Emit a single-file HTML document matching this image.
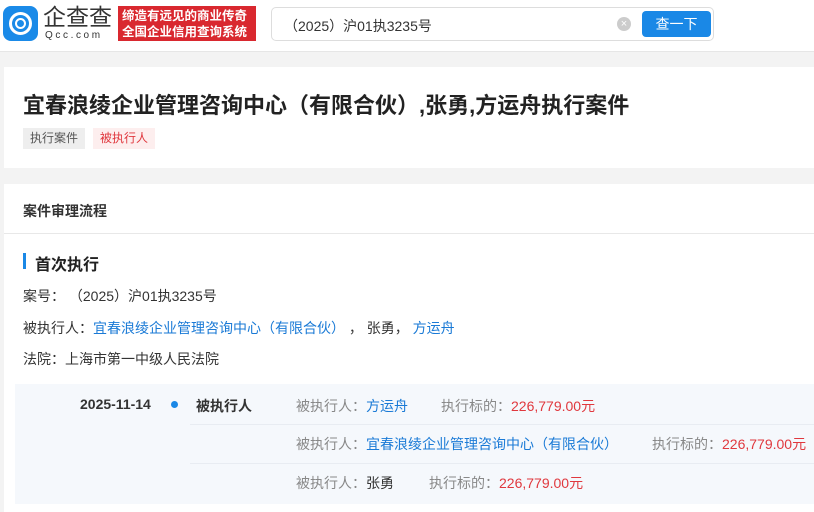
<!DOCTYPE html><html><head><meta charset="utf-8"><style>
*{margin:0;padding:0;box-sizing:border-box}
body{width:814px;height:512px;overflow:hidden;background:#f3f3f3;font-family:"Liberation Sans","Noto Sans CJK SC",sans-serif;color:#333;position:relative}
.a{position:absolute;white-space:nowrap}
.blue{color:#1a7ad6}.red{color:#e0383e}.g{color:#888}
</style></head><body>
<div class="a" style="left:0;top:0;width:814px;height:52px;background:#fff;border-bottom:1px solid #e6e6e6"></div>
<div class="a" style="left:3px;top:6px;width:35px;height:35px;border-radius:8px;background:#1a8ae8"></div>
<div class="a" style="left:9px;top:12px;width:23px;height:23px;border-radius:50%;border:3px solid #fff"></div>
<div class="a" style="left:15px;top:18px;width:11px;height:11px;border-radius:50%;border:2.5px solid #fff"></div>
<div class="a" style="left:43px;top:4px;font-size:23px;color:#333;line-height:26px">企查查</div>
<div class="a" style="left:45px;top:30px;font-size:10px;letter-spacing:2.6px;color:#333">Qcc.com</div>
<div class="a" style="left:118px;top:6px;width:138px;height:35px;background:#d9282f;color:#fff;font-size:12.5px;line-height:16px;padding:2px 4px;font-weight:bold">缔造有远见的商业传奇<br>全国企业信用查询系统</div>
<div class="a" style="left:271px;top:7px;width:443px;height:34px;border:1px solid #ddd;border-radius:5px;background:#fff"></div>
<div class="a" style="left:284px;top:16px;font-size:14px;color:#333">（2025）沪01执3235号</div>
<div class="a" style="left:617px;top:17px;width:14px;height:14px;border-radius:50%;background:#ccc;color:#fff;font-size:11px;line-height:14px;text-align:center">×</div>
<div class="a" style="left:642px;top:11px;width:69px;height:26px;border-radius:4px;background:#1a88e6;color:#fff;font-size:14px;line-height:26px;text-align:center">查一下</div>

<div class="a" style="left:4px;top:67px;width:810px;height:101px;background:#fff"></div>
<div class="a" style="left:23px;top:88px;font-size:22px;font-weight:bold;color:#222">宜春浪绫企业管理咨询中心（有限合伙）,张勇,方运舟执行案件</div>
<div class="a" style="left:23px;top:128px;height:21px;padding:0 7px;background:#eee;color:#555;font-size:12px;line-height:21px">执行案件</div>
<div class="a" style="left:93px;top:128px;height:21px;padding:0 7px;background:#fdeeee;color:#e0383e;font-size:12px;line-height:21px">被执行人</div>

<div class="a" style="left:4px;top:184px;width:810px;height:328px;background:#fff"></div>
<div class="a" style="left:23px;top:201px;font-size:14px;font-weight:bold">案件审理流程</div>
<div class="a" style="left:4px;top:233px;width:810px;height:1px;background:#e8e8e8"></div>
<div class="a" style="left:23px;top:253px;width:3px;height:16px;background:#1a88e6"></div>
<div class="a" style="left:35px;top:251px;font-size:16px;font-weight:bold;color:#222">首次执行</div>
<div class="a" style="left:23px;top:286px;font-size:14px">案号：&nbsp;（2025）沪01执3235号</div>
<div class="a" style="left:23px;top:318px;font-size:14px">被执行人：<span class="blue">宜春浪绫企业管理咨询中心（有限合伙）</span> ， 张勇， <span class="blue">方运舟</span></div>
<div class="a" style="left:23px;top:349px;font-size:14px">法院：上海市第一中级人民法院</div>

<div class="a" style="left:15px;top:384px;width:799px;height:120px;background:#f5f8fc"></div>
<div class="a" style="left:80px;top:396px;font-size:14px;font-weight:bold">2025-11-14</div>
<div class="a" style="left:171px;top:401px;width:7px;height:7px;border-radius:50%;background:#1a88e6"></div>
<div class="a" style="left:196px;top:396px;font-size:14px;font-weight:bold">被执行人</div>
<div class="a" style="left:190px;top:424px;width:624px;height:1px;background:#e8ecf2"></div>
<div class="a" style="left:190px;top:463px;width:624px;height:1px;background:#e8ecf2"></div>
<div class="a" style="left:296px;top:396px;font-size:14px"><span class="g">被执行人：</span><span class="blue">方运舟</span><span class="g" style="margin-left:33px">执行标的：</span><span class="red">226,779.00元</span></div>
<div class="a" style="left:296px;top:434px;font-size:14px"><span class="g">被执行人：</span><span class="blue">宜春浪绫企业管理咨询中心（有限合伙）</span><span class="g" style="margin-left:34px">执行标的：</span><span class="red">226,779.00元</span></div>
<div class="a" style="left:296px;top:473px;font-size:14px"><span class="g">被执行人：</span>张勇<span class="g" style="margin-left:35px">执行标的：</span><span class="red">226,779.00元</span></div>
</body></html>
